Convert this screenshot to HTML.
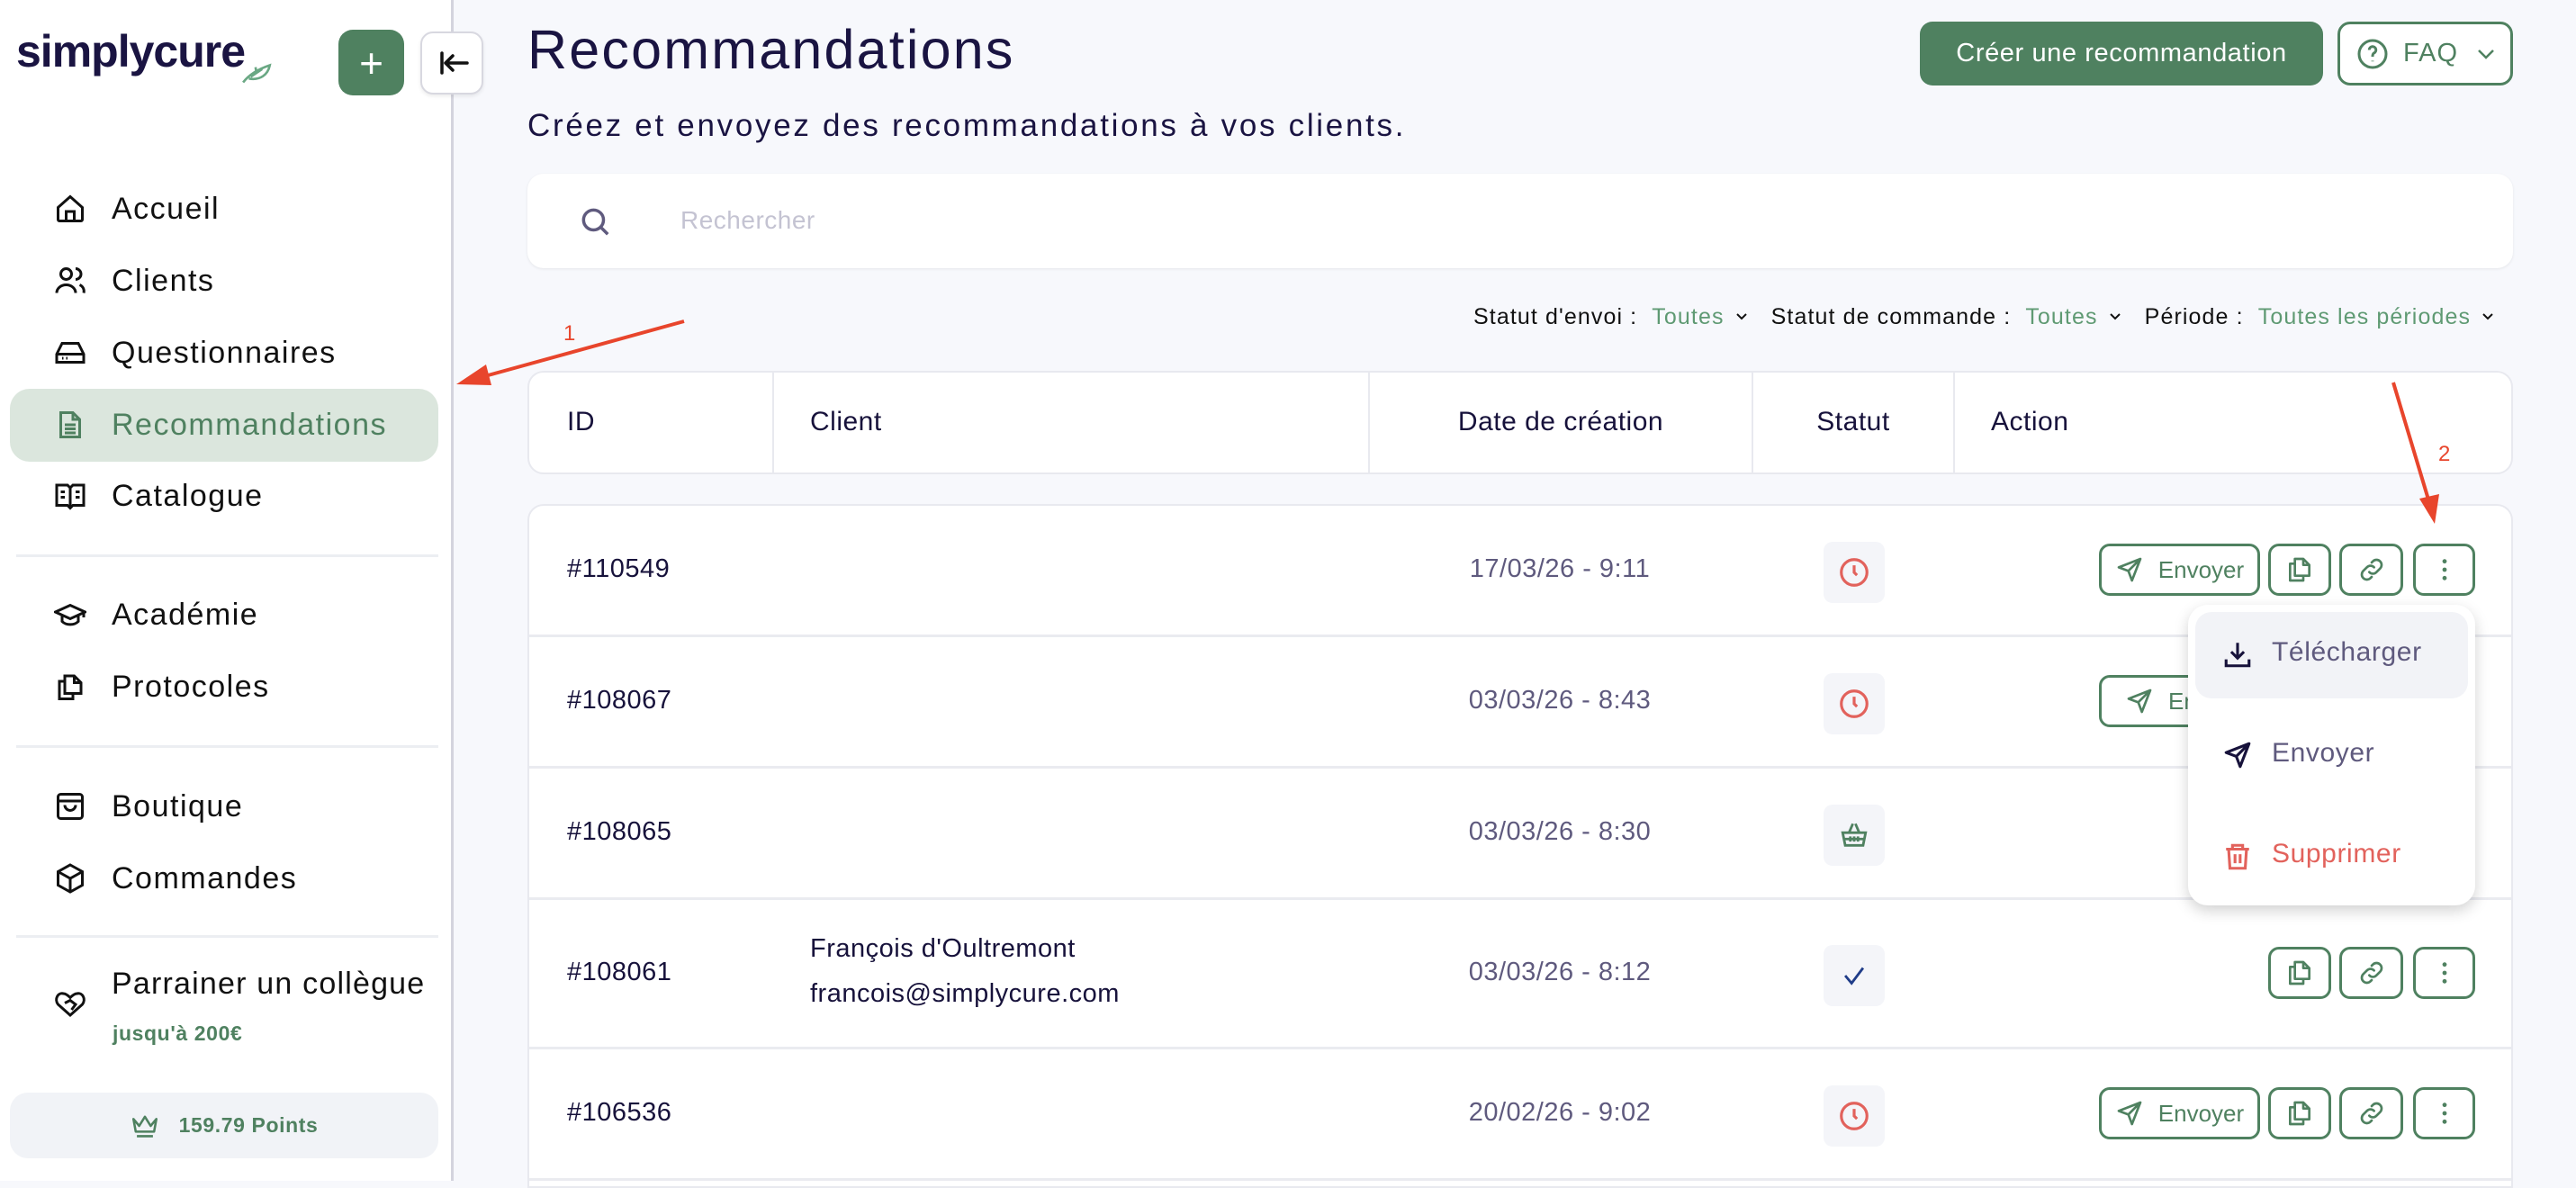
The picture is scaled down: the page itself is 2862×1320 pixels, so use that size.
<!DOCTYPE html>
<html><head><meta charset="utf-8"><style>
*{box-sizing:border-box;margin:0;padding:0}
body{width:2862px;height:1312px;overflow:hidden;background:#f7f8fc;font-family:"Liberation Sans",sans-serif;color:#17123b;position:relative}
.a{position:absolute}
#side{left:0;top:0;width:504px;height:1312px;background:#fff;border-right:3px solid #d4d4de}
.nav{position:absolute;left:0;width:504px;height:80px;display:flex;align-items:center;font-size:34px;letter-spacing:1.5px;color:#111}
.nav svg{position:absolute;left:60px;width:36px;height:36px}
.nav span{position:absolute;left:124px}
.hr{position:absolute;left:18px;width:469px;height:3px;background:#eceef2}
.btn{position:absolute;border:3px solid #4f8160;border-radius:12px;background:#fff;display:flex;align-items:center;justify-content:center;color:#4f8160}
.row{position:absolute;left:0;width:2206px;border-bottom:3px solid #eaebf0}
.id{position:absolute;left:42px;font-size:29px;color:#17123b;letter-spacing:.5px}
.dt{position:absolute;left:1000px;width:290px;text-align:center;font-size:29px;color:#5f5a7e;letter-spacing:.5px}
.badge{position:absolute;left:1438px;width:68px;height:68px;border-radius:10px;background:#f4f5f9;display:flex;align-items:center;justify-content:center}
.chev{display:inline-block;vertical-align:middle;margin:0 10px 4px 12px}
</style></head><body>
<div id="side" class="a">
  <div class="a" style="left:18px;top:28px;font-size:50px;font-weight:bold;color:#1a1442;letter-spacing:-1px">simplycure</div>
  <svg class="a" style="left:268px;top:66px" width="36" height="30" viewBox="0 0 34 24"><path d="M2 22 C8 14 18 8 30 4 C28 14 20 20 8 18 M10 16 L22 8 M16 12 L15 6" fill="none" stroke="#6aa884" stroke-width="2.5"/></svg>
  <div class="a" style="left:376px;top:33px;width:73px;height:73px;border-radius:16px;background:#4f8160;color:#fff;font-size:46px;display:flex;align-items:center;justify-content:center">+</div>
  <div class="a" style="left:467px;top:35px;width:70px;height:70px;border-radius:14px;background:#fff;border:2px solid #d8d8e0;box-shadow:0 2px 4px rgba(0,0,0,.08)">
    <svg width="66" height="66" viewBox="0 0 66 66"><path d="M22 22 V44 M50 33 H26 M34 25 L26 33 L34 41" fill="none" stroke="#111" stroke-width="3.5" stroke-linecap="round" stroke-linejoin="round"/></svg></div>

  <div class="nav" style="top:192px"><svg viewBox="0 0 24 24" fill="none" stroke="#111" stroke-width="2"><path d="M3 11 L12 3 L21 11 V20 a1 1 0 0 1-1 1 H4 a1 1 0 0 1-1-1Z M9 21 V14 H15 V21"/></svg><span>Accueil</span></div>
  <div class="nav" style="top:272px"><svg viewBox="0 0 24 24" fill="none" stroke="#111" stroke-width="2"><circle cx="9" cy="7" r="4"/><path d="M2 21 a7 6 0 0 1 14 0 M16 3 a4 4 0 0 1 0 8 M19 15 a5 5 0 0 1 3 6"/></svg><span>Clients</span></div>
  <div class="nav" style="top:352px"><svg viewBox="0 0 24 24" fill="none" stroke="#111" stroke-width="2"><path d="M2 13 L6 5 H18 L22 13 V19 H2Z M2 13 H22 M6 16 H7 M9 16 H10"/></svg><span>Questionnaires</span></div>
  <div class="a" style="left:11px;top:432px;width:476px;height:81px;border-radius:22px;background:#dbe6dd"></div>
  <div class="nav" style="top:432px;color:#4f8160"><svg viewBox="0 0 24 24" fill="none" stroke="#4f8160" stroke-width="2"><path d="M5 3 H14 L19 8 V21 H5Z M14 3 V8 H19 M8 12 H16 M8 15 H16 M8 18 H16"/></svg><span>Recommandations</span></div>
  <div class="nav" style="top:511px"><svg viewBox="0 0 24 24" fill="none" stroke="#111" stroke-width="2"><path d="M2 4 H10 L12 6 L14 4 H22 V19 H14 L12 21 L10 19 H2Z M12 6 V21 M5 9 H8 M5 13 H8 M16 9 H19 M16 13 H19"/></svg><span>Catalogue</span></div>
  <div class="hr" style="top:616px"></div>
  <div class="nav" style="top:643px"><svg viewBox="0 0 24 24" fill="none" stroke="#111" stroke-width="2"><path d="M1 10 L12 5 L23 10 L12 15Z M6 12 V17 C9 20 15 20 18 17 V12 M22 10 V14"/></svg><span>Académie</span></div>
  <div class="nav" style="top:723px"><svg viewBox="0 0 24 24" fill="none" stroke="#111" stroke-width="2"><path d="M8 4 H15 L20 9 V17 H8Z M15 4 V9 H20 M8 8 H4 V21 H14 V17"/></svg><span>Protocoles</span></div>
  <div class="hr" style="top:828px"></div>
  <div class="nav" style="top:856px"><svg viewBox="0 0 24 24" fill="none" stroke="#111" stroke-width="2"><rect x="3" y="3" width="18" height="18" rx="2"/><path d="M3 8 H21 M8 11 a4 4 0 0 0 8 0"/></svg><span>Boutique</span></div>
  <div class="nav" style="top:936px"><svg viewBox="0 0 24 24" fill="none" stroke="#111" stroke-width="2"><path d="M12 2 L21 7 V17 L12 22 L3 17 V7Z M3 7 L12 12 L21 7 M12 12 V22"/></svg><span>Commandes</span></div>
  <div class="hr" style="top:1039px"></div>
  <div class="nav" style="top:1068px"><svg viewBox="0 0 24 24" fill="none" stroke="#111" stroke-width="2" style="top:30px"><path d="M12 20 L3 12 C0 8 3 3 7 4 C9 4 11 6 12 7 C13 6 15 4 17 4 C21 3 24 8 21 12Z M8 11 L12 9 L16 12 L13 16"/></svg><span style="top:6px;letter-spacing:1.2px">Parrainer un collègue</span></div>
  <div class="a" style="left:125px;top:1135px;font-size:23px;font-weight:bold;color:#4f8160;letter-spacing:.6px">jusqu'à 200€</div>
  <div class="a" style="left:11px;top:1214px;width:476px;height:73px;border-radius:20px;background:#f1f3f7;display:flex;align-items:center;justify-content:center;font-size:23px;font-weight:bold;color:#4f8160;letter-spacing:.6px">
    <svg width="32" height="28" viewBox="0 0 24 22" style="margin-right:22px"><path d="M2 5 L7 11 L12 3 L17 11 L22 5 L20 16 H4Z M5 20 H19" fill="none" stroke="#4f8160" stroke-width="2" stroke-linejoin="round"/></svg>159.79 Points</div>
</div>

<div class="a" style="left:586px;top:20px;font-size:61px;color:#1a1442;letter-spacing:2.2px">Recommandations</div>
<div class="a" style="left:586px;top:120px;font-size:35px;color:#1a1442;letter-spacing:2.7px">Créez et envoyez des recommandations à vos clients.</div>
<div class="a" style="left:2133px;top:24px;width:448px;height:71px;border-radius:14px;background:#4f8160;color:#fff;font-size:29px;display:flex;align-items:center;justify-content:center;letter-spacing:.6px">Créer une recommandation</div>
<div class="btn" style="left:2597px;top:24px;width:195px;height:71px;border-radius:14px;justify-content:flex-start;padding-left:18px;font-size:29px;color:#4f8160">
  <svg width="36" height="36" viewBox="0 0 24 24" fill="none" stroke="#4f8160" stroke-width="2"><circle cx="12" cy="12" r="10"/><path d="M9.5 9 a2.5 2.5 0 1 1 3.5 2.3 C12 12 12 13 12 14 M12 17 V17.5"/></svg>
  <span style="margin-left:16px;letter-spacing:1px">FAQ</span>
  <svg width="22" height="14" viewBox="0 0 22 14" style="margin-left:20px"><path d="M3 3 L11 11 L19 3" fill="none" stroke="#4f8160" stroke-width="2.5"/></svg></div>

<div class="a" style="left:586px;top:193px;width:2206px;height:105px;background:#fff;border-radius:18px;box-shadow:0 1px 3px rgba(0,0,0,.08)">
  <svg class="a" style="left:56px;top:34px" width="38" height="38" viewBox="0 0 24 24" fill="none" stroke="#5f5a7e" stroke-width="2.2"><circle cx="11" cy="11" r="7"/><path d="M16 16 L21 21"/></svg>
  <div class="a" style="left:170px;top:36px;font-size:28px;color:#c4c3d2;letter-spacing:.5px">Rechercher</div>
</div>

<div class="a" style="left:1637px;top:338px;width:1170px;font-size:25px;color:#111;white-space:nowrap;letter-spacing:1.1px">Statut d'envoi :&nbsp;&nbsp;<span style="color:#5f9a73">Toutes</span><svg class="chev" width="14" height="9" viewBox="0 0 14 9"><path d="M2 2 L7 7 L12 2" fill="none" stroke="#111" stroke-width="2"/></svg>&nbsp;&nbsp;Statut de commande :&nbsp;&nbsp;<span style="color:#5f9a73">Toutes</span><svg class="chev" width="14" height="9" viewBox="0 0 14 9"><path d="M2 2 L7 7 L12 2" fill="none" stroke="#111" stroke-width="2"/></svg>&nbsp;&nbsp;Période :&nbsp;&nbsp;<span style="color:#5f9a73">Toutes les périodes</span><svg class="chev" width="14" height="9" viewBox="0 0 14 9"><path d="M2 2 L7 7 L12 2" fill="none" stroke="#111" stroke-width="2"/></svg></div>

<div class="a" style="left:586px;top:412px;width:2206px;height:115px;background:#fff;border-radius:18px;border:2px solid #e8e9ef;font-size:30px;color:#17123b;letter-spacing:.5px">
  <div class="a" style="left:270px;top:0;width:2px;height:111px;background:#e8e9ef"></div>
  <div class="a" style="left:932px;top:0;width:2px;height:111px;background:#e8e9ef"></div>
  <div class="a" style="left:1358px;top:0;width:2px;height:111px;background:#e8e9ef"></div>
  <div class="a" style="left:1582px;top:0;width:2px;height:111px;background:#e8e9ef"></div>
  <div class="a" style="left:42px;top:38px">ID</div>
  <div class="a" style="left:312px;top:38px">Client</div>
  <div class="a" style="left:934px;width:424px;text-align:center;top:38px">Date de création</div>
  <div class="a" style="left:1360px;width:222px;text-align:center;top:38px">Statut</div>
  <div class="a" style="left:1624px;top:38px">Action</div>
</div>

<div class="a" style="left:586px;top:560px;width:2206px;height:760px;background:#fff;border-radius:18px 18px 0 0;border:2px solid #e8e9ef;overflow:hidden">
  <div class="row" style="top:0;height:146px"><div class="id" style="top:54px">#110549</div><div class="dt" style="top:54px">17/03/26 - 9:11</div>
    <div class="badge" style="top:40px"><svg width="38" height="38" viewBox="0 0 24 24" fill="none" stroke="#e2625c" stroke-width="2"><circle cx="12" cy="12" r="9"/><path d="M12 7 V12 L14 14"/></svg></div></div>
  <div class="row" style="top:146px;height:146px"><div class="id" style="top:54px">#108067</div><div class="dt" style="top:54px">03/03/26 - 8:43</div>
    <div class="badge" style="top:40px"><svg width="38" height="38" viewBox="0 0 24 24" fill="none" stroke="#e2625c" stroke-width="2"><circle cx="12" cy="12" r="9"/><path d="M12 7 V12 L14 14"/></svg></div></div>
  <div class="row" style="top:292px;height:146px"><div class="id" style="top:54px">#108065</div><div class="dt" style="top:54px">03/03/26 - 8:30</div>
    <div class="badge" style="top:40px"><svg width="34" height="34" viewBox="0 0 24 24" fill="none" stroke="#4f8160" stroke-width="2"><path d="M3 10 H21 L19 20 H5Z M8 10 L11 3 M16 10 L13 3 M9 13 V17 M12 13 V17 M15 13 V17 M4 15 H20"/></svg></div></div>
  <div class="row" style="top:438px;height:166px"><div class="id" style="top:64px">#108061</div>
    <div class="a" style="left:312px;top:38px;font-size:29px;letter-spacing:.5px">François d'Oultremont</div>
    <div class="a" style="left:312px;top:88px;font-size:29px;letter-spacing:.5px">francois@simplycure.com</div>
    <div class="dt" style="top:64px">03/03/26 - 8:12</div>
    <div class="badge" style="top:50px"><svg width="34" height="34" viewBox="0 0 24 24" fill="none" stroke="#1f3c88" stroke-width="2"><path d="M5 12 L10 18 L19 6"/></svg></div></div>
  <div class="row" style="top:604px;height:146px"><div class="id" style="top:54px">#106536</div><div class="dt" style="top:54px">20/02/26 - 9:02</div>
    <div class="badge" style="top:40px"><svg width="38" height="38" viewBox="0 0 24 24" fill="none" stroke="#e2625c" stroke-width="2"><circle cx="12" cy="12" r="9"/><path d="M12 7 V12 L14 14"/></svg></div></div>
</div>

<svg width="0" height="0" style="position:absolute"><defs>
<symbol id="send" viewBox="0 0 24 24"><path d="M21 3 L3 10 L11 13 L14 21Z M21 3 L11 13" fill="none" stroke="currentColor" stroke-width="2" stroke-linejoin="round"/></symbol>
<symbol id="copy" viewBox="0 0 24 24"><path d="M8 3 H15 L20 8 V17 H8Z M15 3 V8 H20 M8 7 H4 V21 H15 V17" fill="none" stroke="currentColor" stroke-width="2" stroke-linejoin="round"/></symbol>
<symbol id="link" viewBox="0 0 24 24"><path d="M10 14 a4 4 0 0 0 6 0 l3-3 a4 4 0 0 0-6-6 l-1 1 M14 10 a4 4 0 0 0-6 0 l-3 3 a4 4 0 0 0 6 6 l1-1" fill="none" stroke="currentColor" stroke-width="2" stroke-linecap="round"/></symbol>
<symbol id="more" viewBox="0 0 24 24"><circle cx="12" cy="5" r="1.8" fill="currentColor"/><circle cx="12" cy="12" r="1.8" fill="currentColor"/><circle cx="12" cy="19" r="1.8" fill="currentColor"/></symbol>
</defs></svg>

<div class="btn" style="left:2332px;top:604px;width:179px;height:58px;font-size:26px"><svg width="32" height="32"><use href="#send"/></svg><span style="margin-left:16px">Envoyer</span></div>
<div class="btn" style="left:2520px;top:604px;width:70px;height:58px"><svg width="32" height="32"><use href="#copy"/></svg></div>
<div class="btn" style="left:2599px;top:604px;width:71px;height:58px"><svg width="32" height="32"><use href="#link"/></svg></div>
<div class="btn" style="left:2681px;top:604px;width:69px;height:58px"><svg width="32" height="32"><use href="#more"/></svg></div>

<div class="btn" style="left:2332px;top:750px;width:179px;height:58px;font-size:26px;justify-content:flex-start;padding-left:26px"><svg width="32" height="32"><use href="#send"/></svg><span style="margin-left:16px">Envoyer</span></div>

<div class="btn" style="left:2520px;top:1052px;width:70px;height:58px"><svg width="32" height="32"><use href="#copy"/></svg></div>
<div class="btn" style="left:2599px;top:1052px;width:71px;height:58px"><svg width="32" height="32"><use href="#link"/></svg></div>
<div class="btn" style="left:2681px;top:1052px;width:69px;height:58px"><svg width="32" height="32"><use href="#more"/></svg></div>

<div class="btn" style="left:2332px;top:1208px;width:179px;height:58px;font-size:26px"><svg width="32" height="32"><use href="#send"/></svg><span style="margin-left:16px">Envoyer</span></div>
<div class="btn" style="left:2520px;top:1208px;width:70px;height:58px"><svg width="32" height="32"><use href="#copy"/></svg></div>
<div class="btn" style="left:2599px;top:1208px;width:71px;height:58px"><svg width="32" height="32"><use href="#link"/></svg></div>
<div class="btn" style="left:2681px;top:1208px;width:69px;height:58px"><svg width="32" height="32"><use href="#more"/></svg></div>

<div class="a" style="left:2431px;top:672px;width:319px;height:334px;background:#fff;border-radius:22px;box-shadow:0 6px 16px rgba(0,0,0,.18);font-size:30px;letter-spacing:.6px">
  <div class="a" style="left:8px;top:8px;width:303px;height:96px;border-radius:18px;background:#f2f3f7"></div>
  <svg class="a" style="left:38px;top:38px" width="34" height="34" viewBox="0 0 24 24" fill="none" stroke="#17123b" stroke-width="2.2"><path d="M12 3 V15 M7 10 L12 15 L17 10 M3 16 V21 H21 V16"/></svg>
  <div class="a" style="left:93px;top:36px;color:#5f5a7e">Télécharger</div>
  <svg class="a" style="left:38px;top:150px" width="34" height="34" viewBox="0 0 24 24"><path d="M21 3 L3 10 L11 13 L14 21Z M21 3 L11 13" fill="none" stroke="#17123b" stroke-width="2.2" stroke-linejoin="round"/></svg>
  <div class="a" style="left:93px;top:148px;color:#5f5a7e">Envoyer</div>
  <svg class="a" style="left:38px;top:262px" width="34" height="36" viewBox="0 0 24 24" fill="none" stroke="#e2625c" stroke-width="2.2"><path d="M3 6 H21 M8 6 V3 H16 V6 M5 6 L6 21 H18 L19 6 M10 10 V17 M14 10 V17"/></svg>
  <div class="a" style="left:93px;top:260px;color:#e2625c">Supprimer</div>
</div>

<svg class="a" style="left:0;top:0" width="2862" height="1312">
  <line x1="760" y1="357" x2="535" y2="419" stroke="#e8452c" stroke-width="4"/>
  <polygon points="507,427 540,405 546,428" fill="#e8452c"/>
  <line x1="2659" y1="425" x2="2698" y2="555" stroke="#e8452c" stroke-width="4"/>
  <polygon points="2705,582 2688,554 2710,549" fill="#e8452c"/>
  <text x="626" y="378" font-family="Liberation Sans" font-size="24" fill="#e8452c">1</text>
  <text x="2709" y="512" font-family="Liberation Sans" font-size="24" fill="#e8452c">2</text>
</svg>
</body></html>
